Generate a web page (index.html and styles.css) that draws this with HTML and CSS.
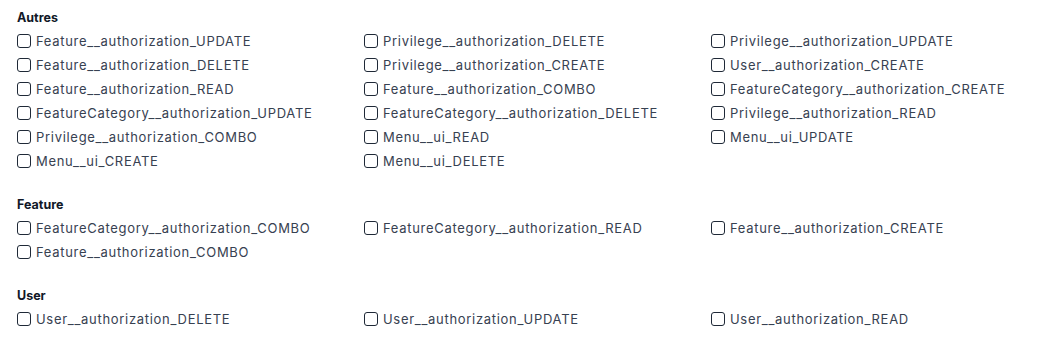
FILE: index.html
```html
<!DOCTYPE html>
<html lang="fr">
<head>
<meta charset="utf-8">
<title>Permissions</title>
<link rel="stylesheet" href="styles.css">
</head>
<body>
<div class="page">
  <section class="group">
    <h3 class="group-title">Autres</h3>
    <div class="grid">
      <label class="item"><input type="checkbox"><span>Feature__authorization_UPDATE</span></label>
      <label class="item"><input type="checkbox"><span>Privilege__authorization_DELETE</span></label>
      <label class="item"><input type="checkbox"><span>Privilege__authorization_UPDATE</span></label>
      <label class="item"><input type="checkbox"><span>Feature__authorization_DELETE</span></label>
      <label class="item"><input type="checkbox"><span>Privilege__authorization_CREATE</span></label>
      <label class="item"><input type="checkbox"><span>User__authorization_CREATE</span></label>
      <label class="item"><input type="checkbox"><span>Feature__authorization_READ</span></label>
      <label class="item"><input type="checkbox"><span>Feature__authorization_COMBO</span></label>
      <label class="item"><input type="checkbox"><span>FeatureCategory__authorization_CREATE</span></label>
      <label class="item"><input type="checkbox"><span>FeatureCategory__authorization_UPDATE</span></label>
      <label class="item"><input type="checkbox"><span>FeatureCategory__authorization_DELETE</span></label>
      <label class="item"><input type="checkbox"><span>Privilege__authorization_READ</span></label>
      <label class="item"><input type="checkbox"><span>Privilege__authorization_COMBO</span></label>
      <label class="item"><input type="checkbox"><span>Menu__ui_READ</span></label>
      <label class="item"><input type="checkbox"><span>Menu__ui_UPDATE</span></label>
      <label class="item"><input type="checkbox"><span>Menu__ui_CREATE</span></label>
      <label class="item"><input type="checkbox"><span>Menu__ui_DELETE</span></label>
    </div>
  </section>
  <section class="group">
    <h3 class="group-title">Feature</h3>
    <div class="grid">
      <label class="item"><input type="checkbox"><span>FeatureCategory__authorization_COMBO</span></label>
      <label class="item"><input type="checkbox"><span>FeatureCategory__authorization_READ</span></label>
      <label class="item"><input type="checkbox"><span>Feature__authorization_CREATE</span></label>
      <label class="item"><input type="checkbox"><span>Feature__authorization_COMBO</span></label>
    </div>
  </section>
  <section class="group">
    <h3 class="group-title">User</h3>
    <div class="grid">
      <label class="item"><input type="checkbox"><span>User__authorization_DELETE</span></label>
      <label class="item"><input type="checkbox"><span>User__authorization_UPDATE</span></label>
      <label class="item"><input type="checkbox"><span>User__authorization_READ</span></label>
    </div>
  </section>
</div>
</body>
</html>
```
FILE: styles.css
```css
* { box-sizing: border-box; }
html, body { margin: 0; background: #ffffff; }
body {
  font-family: Inter, "Noto Sans", "Liberation Sans", sans-serif;
  color: #374151;
}
.page {
  padding: 8px 17px;
  display: flex;
  flex-direction: column;
  gap: 22px;
}
.group-title {
  margin: 0 0 1px;
  font-size: 12.5px;
  line-height: 20px;
  font-weight: 700;
  color: #111827;
}
.grid {
  display: grid;
  grid-template-columns: repeat(3, 347px);
}
.item {
  display: flex;
  align-items: center;
  gap: 5px;
  height: 24px;
  font-size: 13px;
  line-height: 20px;
  letter-spacing: 0.7px;
  white-space: nowrap;
}
.item input {
  appearance: none;
  -webkit-appearance: none;
  margin: 0;
  width: 14px;
  height: 14px;
  border: 1.7px solid #1f2937;
  border-radius: 3px;
  background: #fff;
  flex: none;
}
```
